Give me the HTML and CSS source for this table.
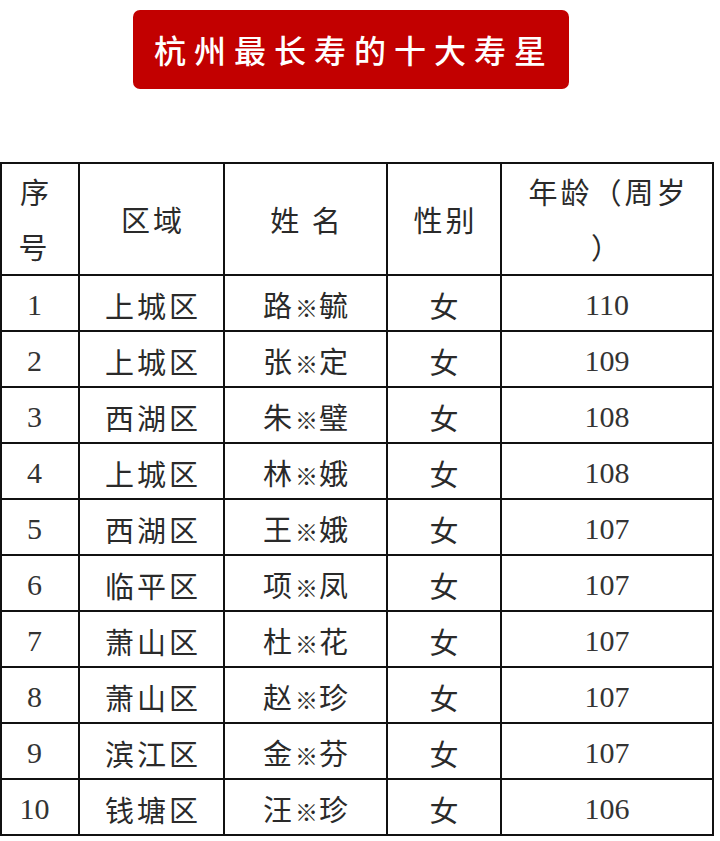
FILE: index.html
```html
<!DOCTYPE html>
<html lang="zh-CN">
<head>
<meta charset="utf-8">
<link rel="stylesheet" href="styles.css">
</head>
<body>
<div class="page">
  <div class="title-wrap"><h1 class="title">杭州最长寿的十大寿星</h1></div>
  <table class="grid">
    <colgroup>
      <col class="c1"><col class="c2"><col class="c3"><col class="c4"><col class="c5">
    </colgroup>
    <thead>
      <tr>
        <th class="first">序<br>号</th>
        <th>区域</th>
        <th>姓 名</th>
        <th>性别</th>
        <th>年龄（周岁<br>）</th>
      </tr>
    </thead>
    <tbody>
      <tr><td class="num first">1</td><td>上城区</td><td>路<span class="mark">※</span>毓</td><td>女</td><td class="num">110</td></tr>
      <tr><td class="num first">2</td><td>上城区</td><td>张<span class="mark">※</span>定</td><td>女</td><td class="num">109</td></tr>
      <tr><td class="num first">3</td><td>西湖区</td><td>朱<span class="mark">※</span>璧</td><td>女</td><td class="num">108</td></tr>
      <tr><td class="num first">4</td><td>上城区</td><td>林<span class="mark">※</span>娥</td><td>女</td><td class="num">108</td></tr>
      <tr><td class="num first">5</td><td>西湖区</td><td>王<span class="mark">※</span>娥</td><td>女</td><td class="num">107</td></tr>
      <tr><td class="num first">6</td><td>临平区</td><td>项<span class="mark">※</span>凤</td><td>女</td><td class="num">107</td></tr>
      <tr><td class="num first">7</td><td>萧山区</td><td>杜<span class="mark">※</span>花</td><td>女</td><td class="num">107</td></tr>
      <tr><td class="num first">8</td><td>萧山区</td><td>赵<span class="mark">※</span>珍</td><td>女</td><td class="num">107</td></tr>
      <tr><td class="num first">9</td><td>滨江区</td><td>金<span class="mark">※</span>芬</td><td>女</td><td class="num">107</td></tr>
      <tr><td class="num first">10</td><td>钱塘区</td><td>汪<span class="mark">※</span>珍</td><td>女</td><td class="num">106</td></tr>
    </tbody>
  </table>
</div>
</body>
</html>
```

FILE: styles.css
```css
html, body {
  margin: 0;
  padding: 0;
  background: #ffffff;
}

.page {
  width: 720px;
  padding-top: 10px;
  font-family: "Noto Sans CJK SC", "Noto Sans", sans-serif;
  color: #2a2a2a;
}

.title-wrap {
  display: flex;
  padding-left: 133px;
}

.title {
  margin: 0;
  width: 436px;
  height: 79px;
  box-sizing: border-box;
  background: #c20000;
  border-radius: 7px;
  color: #ffffff;
  font-size: 32px;
  font-weight: 500;
  letter-spacing: 8px;
  line-height: 79px;
  text-align: center;
  white-space: nowrap;
  padding-left: 6px;
}

.grid {
  margin-top: 73px;
  border-collapse: collapse;
  table-layout: fixed;
  width: 712px;
}

.c1 { width: 78px; }
.c2 { width: 145px; }
.c3 { width: 163px; }
.c4 { width: 114px; }
.c5 { width: 212px; }

.grid th,
.grid td {
  border: 2px solid #111111;
  padding: 0;
  text-align: center;
  vertical-align: middle;
  font-weight: 400;
  font-size: 29px;
  letter-spacing: 3px;
  text-indent: 3px;
  color: #2a2a2a;
}

.grid th {
  height: 106px;
  line-height: 55px;
}

.grid td {
  height: 56px;
  line-height: 36px;
  padding-top: 4px;
  box-sizing: border-box;
}

.grid td.num {
  font-family: "Liberation Serif", serif;
  font-size: 30px;
  letter-spacing: 0;
  text-indent: 0;
  color: #333333;
}

.grid .first {
  padding-right: 11px;
}

.mark {
  font-size: 23px;
  letter-spacing: 1px;
}
```
